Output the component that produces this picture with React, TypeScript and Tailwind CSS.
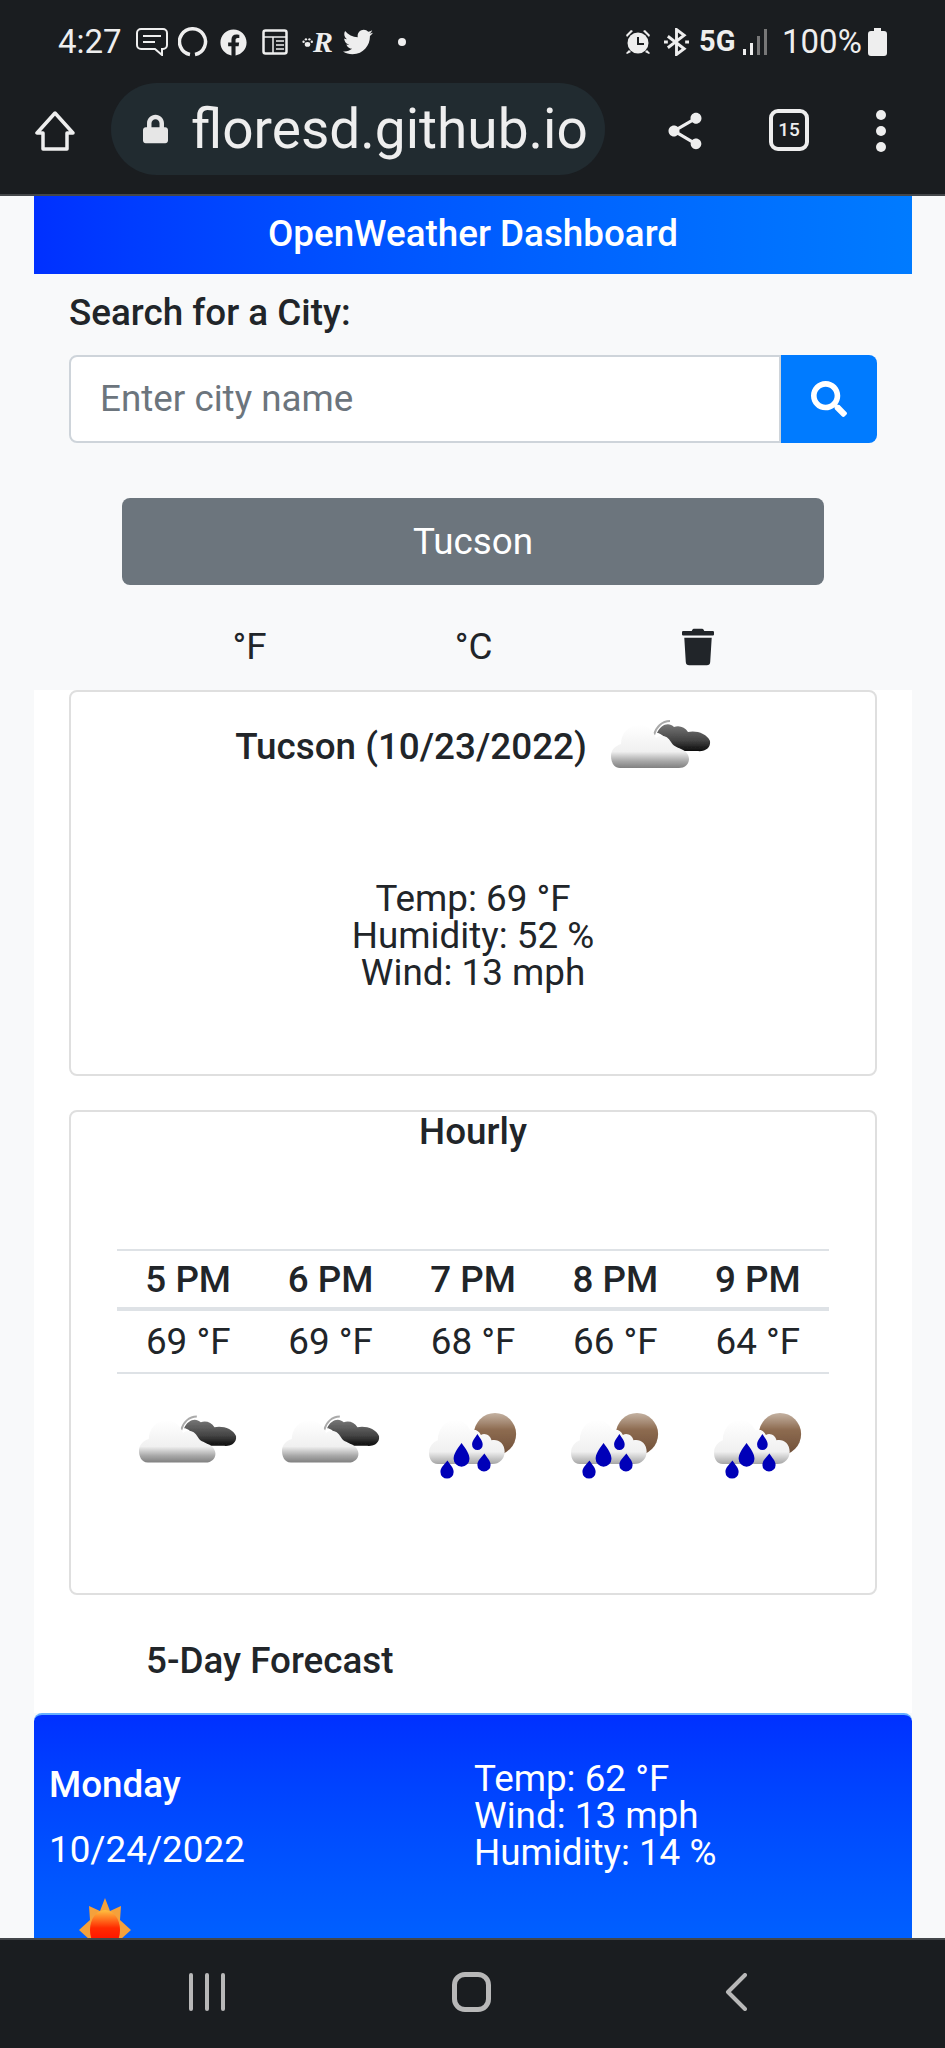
import { FaFacebook, FaLock, FaSearch, FaTrash, FaTwitter } from "react-icons/fa";
import { MdShare } from "react-icons/md";

const CloudyIcon = ({ className }: { className: string }) => (
  <svg viewBox="0 0 100 52" className={className}>
    <defs>
      <linearGradient id="cloudLight" x1="0" y1="0" x2="0" y2="1">
        <stop offset="0" stopColor="#ffffff" />
        <stop offset="0.62" stopColor="#f0f0f0" />
        <stop offset="0.84" stopColor="#a8a8a8" />
        <stop offset="1" stopColor="#808080" />
      </linearGradient>
      <linearGradient id="cloudDark" x1="0" y1="0" x2="0" y2="1">
        <stop offset="0" stopColor="#777777" />
        <stop offset="0.6" stopColor="#444444" />
        <stop offset="1" stopColor="#0c0c0c" />
      </linearGradient>
      <filter id="soft">
        <feGaussianBlur stdDeviation="0.5" />
      </filter>
    </defs>
    <g filter="url(#soft)">
      <path d="M43 17C45 9 51 3 59 3" fill="none" stroke="#aaaaaa" strokeWidth="2" />
      <path
        d="M46 15C50 6 58 4 63 9C68 7 74 9 77 14C84 12 96 15 99 23C100 30 94 34 86 33L68 33C62 30 58 25 55 22C52 17 49 15 46 15Z"
        fill="url(#cloudDark)"
      />
      <path
        d="M9 50C2 50 0 43 0 38C0 32 4 28 10 26C10 16 17 7 28 7C38 7 43 14 45 20C50 16 56 17 60 24C62 28 66 29 70 31C76 33 78 38 78 41C78 46 74 50 68 50Z"
        fill="url(#cloudLight)"
      />
    </g>
  </svg>
);

const RainIcon = ({ className }: { className: string }) => (
  <svg viewBox="0 0 100 75" className={className}>
    <defs>
      <linearGradient id="moon" x1="0" y1="0" x2="0" y2="1">
        <stop offset="0" stopColor="#c4b2a2" />
        <stop offset="0.4" stopColor="#8d6b50" />
        <stop offset="1" stopColor="#6f4f38" />
      </linearGradient>
      <linearGradient id="rainCloud" x1="0" y1="0" x2="0" y2="1">
        <stop offset="0" stopColor="#ffffff" />
        <stop offset="0.72" stopColor="#f0f0f0" />
        <stop offset="1" stopColor="#a5a5a5" />
      </linearGradient>
      <filter id="softRain">
        <feGaussianBlur stdDeviation="0.7" />
      </filter>
    </defs>
    <g filter="url(#softRain)">
      <circle cx="75" cy="24" r="24" fill="url(#moon)" />
      <path
        d="M10 58C3 58 0 52 0 45C0 38 5 33 10 31C10 18 19 8 30 8C38 8 44 13 47 20C51 18 56 19 59 25C64 22 70 26 71 31C78 29 86 34 86 44C86 52 80 58 72 58Z"
        fill="url(#rainCloud)"
      />
      <path d="M37 34c5 7 9 12 9 18a9 9 0 0 1-18 0c0-6 4-11 9-18z" fill="#0000b8" />
      <path d="M55 24c3 5 6 8 6 12a6 6 0 0 1-12 0c0-4 3-7 6-12z" fill="#0000b8" />
      <path d="M63 46c3 5 7 8 7 13a7.500 7.500 0 0 1-15 0c0-5 4-8 8-13z" fill="#0000b8" />
      <path d="M21 54c3 5 7 8 7 13a7.500 7.500 0 0 1-15 0c0-5 4-8 8-13z" fill="#0000b8" />
    </g>
  </svg>
);

const SunIcon = () => (
  <svg viewBox="0 0 54 64" className="w-[54px] h-[64px] ml-[29px] mt-[23px] block">
    <defs>
      <linearGradient id="sunCore" x1="0" y1="0" x2="0" y2="1">
        <stop offset="0" stopColor="#ffc040" />
        <stop offset="0.45" stopColor="#ff2a00" />
        <stop offset="1" stopColor="#ff0000" />
      </linearGradient>
    </defs>
    <path
      d="M27 0l5 13 11-5-1 14 11 10-11 10 1 14-11-5-5 13-5-13-11 5 1-14L1 32l11-10-1-14 11 5z"
      fill="#f4a13c"
    />
    <ellipse cx="27" cy="32" rx="15" ry="20" fill="url(#sunCore)" />
  </svg>
);

const AlarmIcon = () => (
  <svg viewBox="0 0 26 26" className="w-[26px] h-[26px] ml-[219px]" fill="currentColor">
    <circle cx="13" cy="14" r="10.500" />
    <path d="M1 6l5-5 2 1-6 6zM25 6l-5-5-2 1 6 6zM4 21l-3 3 1 1 4-2zM22 21l3 3-1 1-4-2z" />
    <path d="M13 8v7h6" fill="none" stroke="#1a1d20" strokeWidth="2" />
  </svg>
);

const StatusBar = () => (
  <div className="h-[82px] flex items-center pt-[2px] pl-[58px] text-[#eeeeee] text-[33px] font-['Roboto',sans-serif]">
    <span className="w-[78px]">4:27</span>
    <svg viewBox="0 0 32 28" className="w-[32px] h-[28px]" fill="none" stroke="currentColor" strokeWidth="2">
      <path d="M5 1h22a4 4 0 0 1 4 4v12a4 4 0 0 1-4 4h-1v6l-7-6H5a4 4 0 0 1-4-4V5a4 4 0 0 1 4-4z" />
      <path d="M7 8h18M7 14h12" />
    </svg>
    <svg viewBox="0 0 30 30" className="w-[30px] h-[30px] ml-[10px]" fill="none" stroke="currentColor" strokeWidth="3.500">
      <path d="M12 27.500a13 13 0 1 1 5 0" />
    </svg>
    <FaFacebook className="w-[27px] h-[27px] ml-[12px]" />
    <svg viewBox="0 0 26 26" className="w-[26px] h-[26px] ml-[15px]" fill="none" stroke="currentColor" strokeWidth="2.500">
      <rect x="1.500" y="1.500" width="23" height="23" rx="2" />
      <path d="M2 8h22M11 8v16M14 12h8M14 16h8M14 20h8" strokeWidth="1.500" />
    </svg>
    <span className="ml-[14px] w-[31px] flex items-center">
      <svg viewBox="0 0 14 14" className="w-[13px] h-[13px]" fill="currentColor">
        <ellipse cx="7" cy="9.500" rx="3.500" ry="3" />
        <circle cx="2" cy="6" r="1.500" />
        <circle cx="5" cy="3" r="1.500" />
        <circle cx="9.500" cy="3" r="1.500" />
        <circle cx="12.500" cy="6" r="1.500" />
      </svg>
      <span className="text-[30px] leading-none italic font-bold font-['Liberation_Serif',serif]">R</span>
    </span>
    <FaTwitter className="w-[30px] h-[30px] ml-[10px]" />
    <span className="w-[8px] h-[8px] rounded-full bg-[#eeeeee] ml-[25px]" />
    <AlarmIcon />
    <svg viewBox="0 0 26 28" className="w-[25px] h-[28px] ml-[13px]" fill="none" stroke="currentColor" strokeWidth="3">
      <path d="M4 8l17 13-8 6V1l8 6L4 20" />
      <path d="M0 14h4M22 14h4" />
    </svg>
    <span className="ml-[10px] w-[44px] text-[29px] font-bold">5G</span>
    <svg viewBox="0 0 25 26" className="w-[25px] h-[26px]">
      <rect x="0" y="20" width="3" height="6" fill="#eeeeee" />
      <rect x="7" y="14" width="3" height="12" fill="#eeeeee" />
      <rect x="14" y="7" width="3" height="19" fill="#777777" />
      <rect x="21" y="0" width="3" height="26" fill="#777777" />
    </svg>
    <span className="ml-[14px] w-[86px]">100%</span>
    <svg viewBox="0 0 19 28" className="w-[19px] h-[28px]" fill="currentColor">
      <path d="M6 0h7v3h3a3 3 0 0 1 3 3v19a3 3 0 0 1-3 3H3a3 3 0 0 1-3-3V6a3 3 0 0 1 3-3h3z" />
    </svg>
  </div>
);

const UrlBar = () => (
  <div className="h-[112px] flex items-start pt-[1px] text-[#eeeeee] font-['Roboto',sans-serif]">
    <svg viewBox="0 0 40 40" className="w-[40px] h-[40px] ml-[35px] mt-[28px]" fill="none" stroke="currentColor" strokeWidth="3.500" strokeLinejoin="round">
      <path d="M20 2L2 22h6v16h24V22h6z" />
    </svg>
    <div className="ml-[36px] w-[494px] h-[92px] rounded-full bg-[#212b30] flex items-center">
      <FaLock className="ml-[32px] w-[25px] h-[30px] text-[#e6e6e6]" />
      <span className="ml-[23px] text-[55px] leading-none">floresd.github.io</span>
    </div>
    <MdShare className="w-[44px] h-[44px] ml-[58px] mt-[26px]" />
    <div className="ml-[62px] mt-[26px] w-[40px] h-[42px] rounded-[9px] border-[4px] border-[#eeeeee] flex items-center justify-center text-[19px] font-medium">
      15
    </div>
    <div className="ml-[67px] mt-[27px] flex flex-col gap-[6px]">
      <span className="block w-[10px] h-[10px] rounded-full bg-[#eeeeee]" />
      <span className="block w-[10px] h-[10px] rounded-full bg-[#eeeeee]" />
      <span className="block w-[10px] h-[10px] rounded-full bg-[#eeeeee]" />
    </div>
  </div>
);

const hours = [
  { time: "5 PM", temp: "69 °F", rain: false },
  { time: "6 PM", temp: "69 °F", rain: false },
  { time: "7 PM", temp: "68 °F", rain: true },
  { time: "8 PM", temp: "66 °F", rain: true },
  { time: "9 PM", temp: "64 °F", rain: true },
];

const Dashboard = () => (
  <div className="flex-1 overflow-hidden bg-[#f8f9fa] pl-[34px] pr-[33px] text-[#212529] text-[36.800px] font-['Roboto',sans-serif]">
    <div className="h-[78px] pb-[3px] bg-gradient-to-r from-[#0030ff] to-[#007bff] flex items-center justify-center text-white font-medium">
      OpenWeather Dashboard
    </div>

    <div className="px-[35px]">
      <div className="pt-[14px] h-[81px] font-medium leading-[50px]">Search for a City:</div>
      <div className="flex h-[88px]">
        <div className="flex-1 bg-white border-2 border-[#ced4da] rounded-l-[8px] flex items-center pl-[29px] text-[#6c757d]">
          Enter city name
        </div>
        <div className="w-[96px] bg-[#007bff] rounded-r-[8px] flex items-center justify-center">
          <FaSearch className="w-[36px] h-[36px] text-white" />
        </div>
      </div>
      <div className="mt-[55px] mx-[53px] h-[87px] bg-[#6c757d] rounded-[8px] flex items-center justify-center text-white">
        Tucson
      </div>
      <div className="h-[105px] pt-[19px] flex items-center">
        <span className="w-[127px] ml-[117px] text-center">°F</span>
        <span className="w-[127px] ml-[97px] text-center">°C</span>
        <span className="w-[127px] ml-[97px] flex justify-center">
          <FaTrash className="w-[32px] h-[38px]" />
        </span>
      </div>
    </div>

    <div className="bg-white px-[35px] pb-[28px]">
      <div className="h-[386px] border-2 border-[#dfdfdf] rounded-[8px] text-center">
        <div className="h-[188px] pt-[24px] flex justify-center items-start">
          <span className="font-medium leading-[50px] mt-[6px]">Tucson (10/23/2022)</span>
          <CloudyIcon className="w-[100px] h-[56px] ml-[24px]" />
        </div>
        <div className="leading-[37px]">
          <div>Temp: 69 °F</div>
          <div>Humidity: 52 %</div>
          <div>Wind: 13 mph</div>
        </div>
      </div>

      <div className="mt-[34px] h-[485px] border-2 border-[#dfdfdf] rounded-[8px] px-[46px]">
        <div className="h-[137px] text-center font-medium leading-[40px]">Hourly</div>
        <div className="grid grid-cols-5 text-center">
          {hours.map((h) => (
            <div key={h.time} className="h-[62px] pt-[2px] border-t-2 border-b-[4px] border-[#dee2e6] font-medium flex items-center justify-center">
              {h.time}
            </div>
          ))}
          {hours.map((h) => (
            <div key={h.time} className="h-[63px] pt-[1px] border-b-2 border-[#dee2e6] flex items-center justify-center">
              {h.temp}
            </div>
          ))}
          {hours.map((h) => (
            <div key={h.time} className="pt-[39px] flex justify-center">
              {h.rain ? (
                <RainIcon className="w-[88px] h-[66px]" />
              ) : (
                <CloudyIcon className="w-[98px] h-[52px]" />
              )}
            </div>
          ))}
        </div>
      </div>

      <div className="h-[90px] pt-[41px] pl-[77px] font-medium leading-[50px]">5-Day Forecast</div>
    </div>

    <div className="h-[400px] rounded-t-[8px] border-t-2 border-[#66b0ff] bg-gradient-to-b from-[#0030ff] to-[#007bff] text-white">
      <div className="flex pt-[45px]">
        <div className="w-[440px] pl-[15px]">
          <div className="font-medium leading-[50px]">Monday</div>
          <div className="mt-[15px] leading-[50px]">10/24/2022</div>
          <SunIcon />
        </div>
        <div className="leading-[37px]">
          <div>Temp: 62 °F</div>
          <div>Wind: 13 mph</div>
          <div>Humidity: 14 %</div>
        </div>
      </div>
    </div>
  </div>
);

const NavBar = () => (
  <div className="h-[110px] pb-[4px] bg-[#1a1d20] border-t-2 border-[#44474a] flex items-center text-[#b8b8b8]">
    <div className="ml-[189px] flex gap-[12px]">
      <span className="block w-[4px] h-[38px] rounded-full bg-[#b8b8b8]" />
      <span className="block w-[4px] h-[38px] rounded-full bg-[#b8b8b8]" />
      <span className="block w-[4px] h-[38px] rounded-full bg-[#b8b8b8]" />
    </div>
    <div className="ml-[227px] w-[39px] h-[40px] rounded-[13px] border-[5px] border-[#b8b8b8]" />
    <svg viewBox="0 0 22 38" className="w-[22px] h-[38px] ml-[234px]" fill="none" stroke="currentColor" strokeWidth="4" strokeLinecap="round" strokeLinejoin="round">
      <path d="M20 2L3 19l17 17" />
    </svg>
  </div>
);

export default function App() {
  return (
    <div className="w-[945px] h-[2048px] flex flex-col overflow-hidden">
      <div className="h-[196px] bg-[#1a1d20] border-b-2 border-[#44474a]">
        <StatusBar />
        <UrlBar />
      </div>
      <Dashboard />
      <NavBar />
    </div>
  );
}
